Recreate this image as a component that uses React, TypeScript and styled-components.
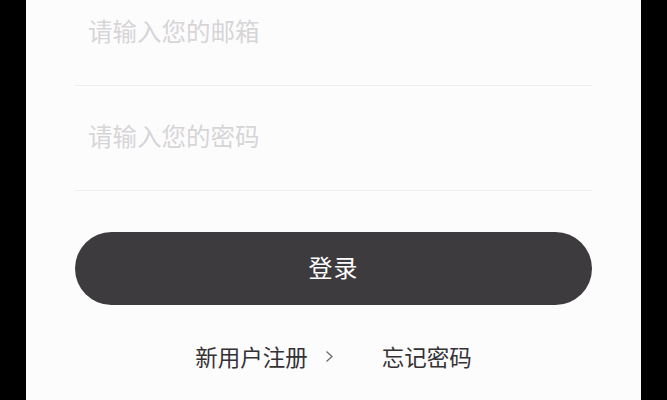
import styled, { createGlobalStyle } from "styled-components";

const GlobalStyle = createGlobalStyle`
  html, body {
    margin: 0;
    padding: 0;
    background: #000;
    height: 100%;
    overflow: hidden;
  }
  #root {
    height: 100%;
  }
`;

const Screen = styled.div`
  width: 615px;
  height: 400px;
  margin: 0 auto;
  background-color: #fdfcfd;
  overflow: hidden;
  font-family: "Noto Sans CJK SC", "Noto Sans", sans-serif;
`;

const Form = styled.form`
  margin: -19px 49px 0;
  display: flex;
  flex-direction: column;
`;

const Field = styled.div`
  height: 98px;
  padding-bottom: 6px;
  border-bottom: 1px solid #efefef;
  display: flex;
  align-items: center;
`;

const Input = styled.input`
  flex: 1;
  border: none;
  outline: none;
  background: transparent;
  padding: 0 0 0 13px;
  font-family: inherit;
  font-size: 24.5px;
  color: #333;

  &::placeholder {
    color: #d6d5d7;
  }
`;

const SubmitButton = styled.button`
  margin-top: 41px;
  height: 73px;
  padding: 0 0 4px;
  border: none;
  border-radius: 37px;
  background-color: #3e3b3e;
  color: #fff;
  font-family: inherit;
  font-size: 24px;
  letter-spacing: 1px;
  cursor: pointer;
`;

const Links = styled.div`
  margin-top: 40px;
  display: flex;
  justify-content: center;
  align-items: center;
  gap: 48px;
`;

const LinkItem = styled.a`
  display: flex;
  align-items: center;
  gap: 17px;
  font-size: 22.5px;
  color: #343234;
  text-decoration: none;
  line-height: 1;
`;

const Chevron = () => (
  <svg width="9" height="13" viewBox="0 0 9 13" fill="none">
    <path d="M1.5 1.5 L7 6.5 L1.5 11.5" stroke="#666" strokeWidth="1.2" />
  </svg>
);

const App = () => {
  return (
    <>
      <GlobalStyle />
      <Screen>
        <Form onSubmit={(e) => e.preventDefault()}>
          <Field>
            <Input type="email" placeholder="请输入您的邮箱" />
          </Field>
          <Field>
            <Input type="password" placeholder="请输入您的密码" />
          </Field>
          <SubmitButton type="submit">登录</SubmitButton>
          <Links>
            <LinkItem href="#">
              新用户注册
              <Chevron />
            </LinkItem>
            <LinkItem href="#">忘记密码</LinkItem>
          </Links>
        </Form>
      </Screen>
    </>
  );
};

export default App;
